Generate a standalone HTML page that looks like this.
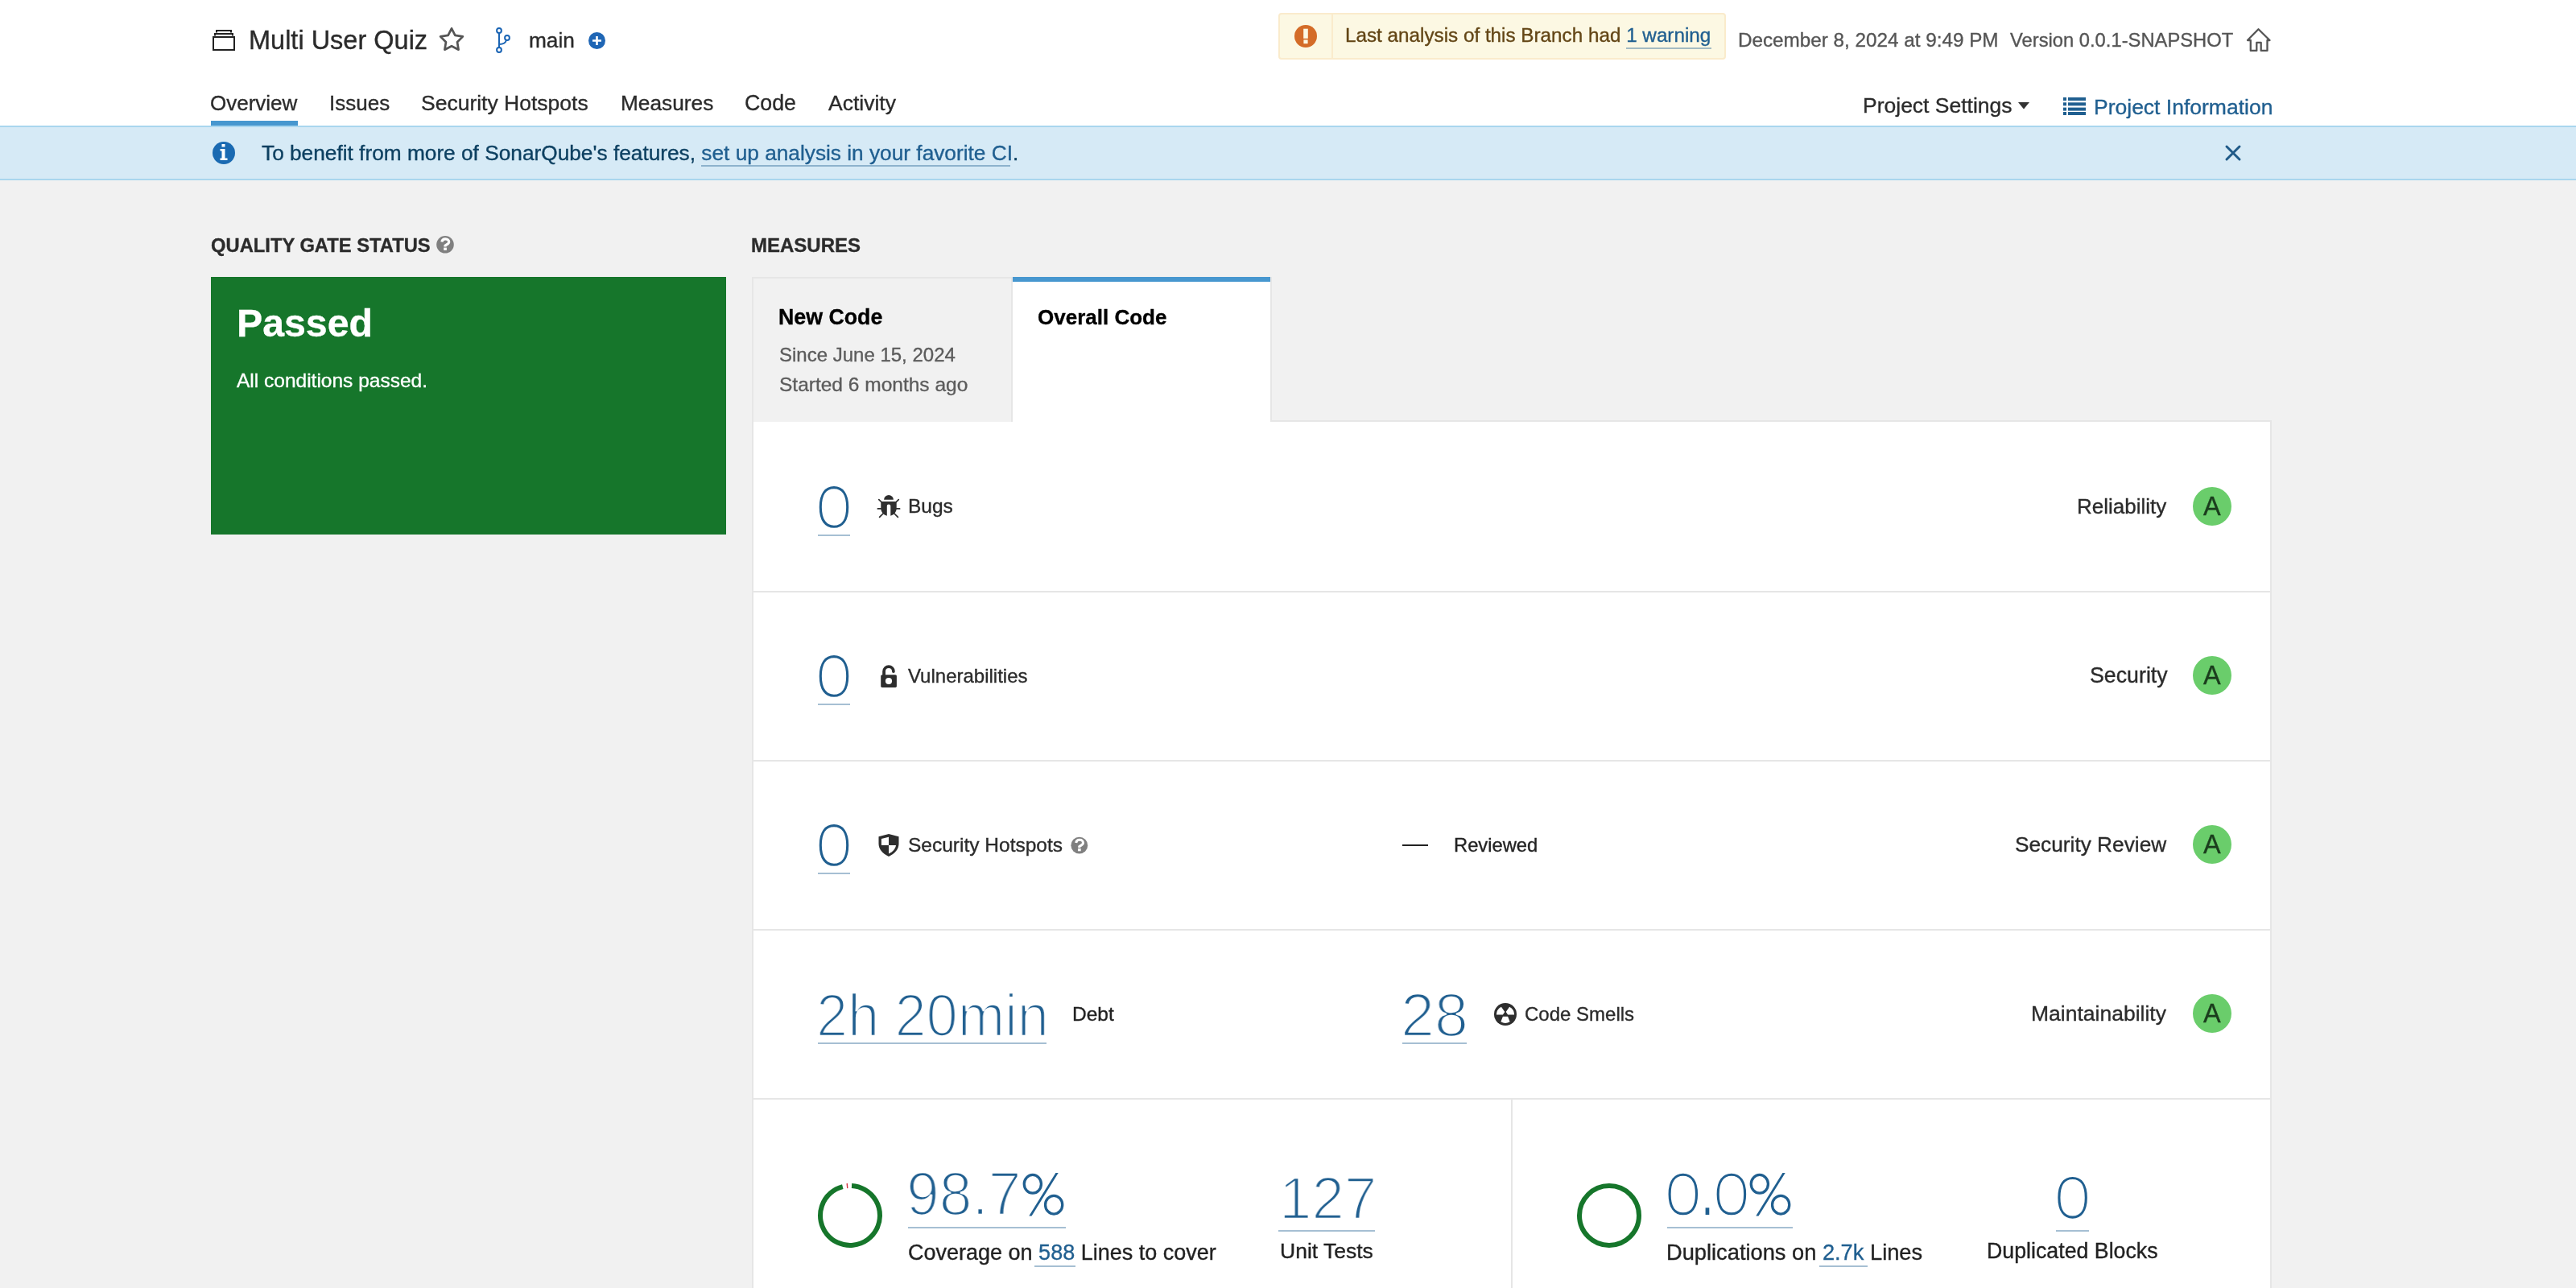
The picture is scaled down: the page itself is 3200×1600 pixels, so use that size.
<!DOCTYPE html>
<html><head><meta charset="utf-8"><title>Multi User Quiz - Overview</title>
<style>
html,body{margin:0;padding:0;width:3200px;height:1600px;overflow:hidden;background:#f1f1f1;font-family:"Liberation Sans",sans-serif}
.abs{position:absolute}
.t{position:absolute;white-space:nowrap;line-height:1;font-family:"Liberation Sans",sans-serif;will-change:transform;-webkit-text-stroke:0.35px currentColor}
.lk,.lk2,.lk3{color:#205f90}
svg{position:absolute;left:0;top:0;overflow:visible}
</style></head><body>
<!-- header -->
<div class="abs" style="left:0;top:0;width:3200px;height:156px;background:#fff"></div>
<div class="abs" style="left:1588px;top:16px;width:556px;height:58px;box-sizing:border-box;background:#fcf8e3;border:2px solid #faebcc;border-radius:4px"></div>
<div class="abs" style="left:1654px;top:18px;width:2px;height:54px;background:#faebcc"></div>
<div class="abs" style="left:262px;top:150px;width:108px;height:6px;background:#4797cf"></div>
<!-- banner -->
<div class="abs" style="left:0;top:156px;width:3200px;height:68px;box-sizing:border-box;background:#d6eaf6;border-top:2px solid #a9d6ee;border-bottom:2px solid #a9d6ee"></div>
<!-- quality gate -->
<div class="abs" style="left:262px;top:344px;width:640px;height:320px;background:#16762b"></div>
<!-- measures panel -->
<div class="abs" style="left:934px;top:522px;width:1888px;height:1200px;box-sizing:border-box;background:#fff;border:2px solid #e6e6e6"></div>
<div class="abs" style="left:934px;top:344px;width:324px;height:180px;box-sizing:border-box;background:#f1f1f1;border:2px solid #e6e6e6;border-bottom:0"></div>
<div class="abs" style="left:1258px;top:344px;width:322px;height:180px;box-sizing:border-box;background:#fff;border:2px solid #e6e6e6;border-bottom:0;border-left:0"></div>
<div class="abs" style="left:1258px;top:344px;width:320px;height:6px;background:#4797cf"></div>
<div class="abs" style="left:936px;top:734px;width:1884px;height:2px;background:#e6e6e6"></div><div class="abs" style="left:936px;top:944px;width:1884px;height:2px;background:#e6e6e6"></div><div class="abs" style="left:936px;top:1154px;width:1884px;height:2px;background:#e6e6e6"></div><div class="abs" style="left:936px;top:1364px;width:1884px;height:2px;background:#e6e6e6"></div>
<div class="abs" style="left:1877px;top:1366px;width:2px;height:300px;background:#e6e6e6"></div>
<div class="abs" style="left:2724px;top:605px;width:48px;height:48px;border-radius:50%;background:#6acd6b"></div><div class="abs" style="left:2724px;top:815px;width:48px;height:48px;border-radius:50%;background:#6acd6b"></div><div class="abs" style="left:2724px;top:1025px;width:48px;height:48px;border-radius:50%;background:#6acd6b"></div><div class="abs" style="left:2724px;top:1235px;width:48px;height:48px;border-radius:50%;background:#6acd6b"></div>
<div class="abs" style="left:2020px;top:58.5px;width:105.6px;height:2px;background:rgba(32,95,144,0.4)"></div><div class="abs" style="left:871px;top:205.4px;width:383.7px;height:2px;background:rgba(32,95,144,0.4)"></div><div class="abs" style="left:1016px;top:664px;width:40.0px;height:2px;background:rgba(32,95,144,0.4)"></div><div class="abs" style="left:1016px;top:874px;width:40.0px;height:2px;background:rgba(32,95,144,0.4)"></div><div class="abs" style="left:1016px;top:1084px;width:40.0px;height:2px;background:rgba(32,95,144,0.4)"></div><div class="abs" style="left:1016px;top:1295px;width:284.0px;height:2px;background:rgba(32,95,144,0.4)"></div><div class="abs" style="left:1742px;top:1295px;width:80.0px;height:2px;background:rgba(32,95,144,0.4)"></div><div class="abs" style="left:1128px;top:1524px;width:196.0px;height:2px;background:rgba(32,95,144,0.4)"></div><div class="abs" style="left:1284.6px;top:1572px;width:51.7px;height:2px;background:rgba(32,95,144,0.4)"></div><div class="abs" style="left:1588px;top:1528px;width:120.0px;height:2px;background:rgba(32,95,144,0.4)"></div><div class="abs" style="left:2071px;top:1524px;width:156.0px;height:2px;background:rgba(32,95,144,0.4)"></div><div class="abs" style="left:2259.6px;top:1572.4px;width:60.4px;height:2px;background:rgba(32,95,144,0.4)"></div><div class="abs" style="left:2554px;top:1528px;width:41.0px;height:2px;background:rgba(32,95,144,0.4)"></div>
<svg width="3200" height="1600" viewBox="0 0 3200 1600">
 <!-- project icon -->
 <g fill="none" stroke="#222" stroke-width="2">
  <rect x="265" y="46" width="26" height="16"/>
  <path d="M267,44.5 V42 H289 V44.5"/>
  <path d="M269,40.5 V38 H287 V40.5"/>
 </g>
 <!-- star -->
 <path d="M561.00,35.30 L565.35,43.91 L574.89,45.39 L568.04,52.19 L569.58,61.71 L561.00,57.30 L552.42,61.71 L553.96,52.19 L547.11,45.39 L556.65,43.91 Z" fill="none" stroke="#555" stroke-width="2.7" stroke-linejoin="round"/>
 <!-- branch -->
 <g fill="none" stroke="#1a64b4" stroke-width="2">
  <circle cx="620" cy="38" r="2.9"/>
  <circle cx="620" cy="62" r="2.9"/>
  <circle cx="630" cy="47" r="2.9"/>
  <path d="M620,41 V59"/>
  <path d="M629,50 C628,53 625,55 620.5,55"/>
 </g>
 <!-- plus circle -->
 <circle cx="741.5" cy="50.5" r="10.5" fill="#1f66b5"/>
 <path d="M741.5,45 V56 M736,50.5 H747" stroke="#fff" stroke-width="2.6"/>
 <!-- warning icon -->
 <circle cx="1622" cy="45" r="14" fill="#d46c28"/>
 <rect x="1619.2" y="35.7" width="5.6" height="12.1" fill="#fcf8e3"/>
 <rect x="1619.4" y="49.4" width="5.2" height="4.8" fill="#fcf8e3"/>
 <!-- home -->
 <path d="M2795.8,62.9 V50 H2792 L2805.5,36.2 L2819.5,50 H2816.5 V62.9 H2808.7 V52.9 H2803.3 V62.9 Z" fill="none" stroke="#555" stroke-width="2.3" stroke-linejoin="round"/>
 <!-- caret -->
 <path d="M2507,127 H2521 L2514,135.5 Z" fill="#333"/>
 <!-- list icon -->
 <g fill="#205f90">
  <rect x="2563" y="121" width="4" height="4"/><rect x="2569" y="121" width="22" height="4"/>
  <rect x="2563" y="127.3" width="4" height="4"/><rect x="2569" y="127.3" width="22" height="4"/>
  <rect x="2563" y="133.6" width="4" height="4"/><rect x="2569" y="133.6" width="22" height="4"/>
  <rect x="2563" y="139" width="4" height="4"/><rect x="2569" y="139" width="22" height="4"/>
 </g>
 <!-- info icon -->
 <circle cx="278" cy="190" r="14" fill="#1a6ab2"/>
 <rect x="275.5" y="179" width="4" height="3.5" fill="#fff"/>
 <path d="M273.5,185 H279.5 V196.5 H282.5 V199 H273.5 V196.5 H275.5 V187.5 H273.5 Z" fill="#fff"/>
 <!-- close X -->
 <path d="M2766,182 L2782,198 M2782,182 L2766,198" stroke="#1f5a88" stroke-width="3" stroke-linecap="round"/>
 <!-- help icons -->
 <g>
  <circle cx="553" cy="303.8" r="10.8" fill="#808080"/>
  <path d="M548.9,300.6 C549.3,298 551.2,296.9 553.3,296.9 C556,296.9 557.7,298.6 557.7,300.6 C557.7,303 555,303.6 553,305.2 V306.6" fill="none" stroke="#fff" stroke-width="3.2"/>
  <rect x="551.2" y="307.6" width="3.7" height="3.3" fill="#fff"/>
 </g>
 <g transform="translate(787.8,746.4)">
  <circle cx="553" cy="303.8" r="10.4" fill="#808080"/>
  <path d="M548.9,300.6 C549.3,298 551.2,296.9 553.3,296.9 C556,296.9 557.7,298.6 557.7,300.6 C557.7,303 555,303.6 553,305.2 V306.6" fill="none" stroke="#fff" stroke-width="3.1"/>
  <rect x="551.2" y="307.6" width="3.7" height="3.3" fill="#fff"/>
 </g>
 <!-- bug -->
 <g fill="#2e2e2e">
  <path d="M1098.1,620.8 A5.9,5.7 0 0 1 1109.9,620.8 Z"/>
  <path d="M1094.3,623 H1113.7 V632 C1113.5,635.5 1111.5,639 1106.3,640.8 V628.6 C1106.3,627.3 1105.3,626.6 1104,626.6 C1102.7,626.6 1101.8,627.3 1101.8,628.6 V640.8 C1096.5,639 1094.5,635.5 1094.3,632 Z"/>
 </g>
 <g stroke="#2e2e2e" stroke-width="1.7" stroke-linecap="round" fill="none">
  <path d="M1091.8,620.6 L1095,623.6 M1116.3,620.6 L1113.2,623.6 M1090.4,631.9 H1094.5 M1117.6,631.9 H1113.5 M1092.6,642.3 L1097,638 M1115.4,642.3 L1111,638"/>
 </g>
 <!-- lock -->
 <rect x="1094.2" y="838.2" width="19.7" height="15.7" rx="1.6" fill="#2e2e2e"/>
 <circle cx="1104" cy="846" r="4.1" fill="#fff"/>
 <path d="M1098.1,838.5 V834 A5.9,5.9 0 0 1 1109.9,834" fill="none" stroke="#2e2e2e" stroke-width="3.8" stroke-linecap="round"/>
 <!-- shield -->
 <path d="M1104,1036 L1116.5,1039.3 V1048 C1116.5,1055 1111.5,1060.5 1104,1064 C1096.5,1060.5 1091.5,1055 1091.5,1048 V1039.3 Z" fill="#2e2e2e"/>
 <path d="M1094.9,1042 L1104,1039.8 V1050 H1094.9 Z M1104,1050 H1113 C1112.4,1054.5 1108.7,1058.6 1104,1060.4 Z" fill="#fff"/>
 <!-- dash -->
 <rect x="1742" y="1049" width="32" height="2" fill="#222"/>
 <!-- code smell -->
 <circle cx="1870" cy="1260" r="14" fill="#2e2e2e"/>
 <path d="M1858.9,1260.6 A11.1,11.1 0 0 1 1864.9,1250.7 L1869.3,1257 L1866.9,1260.6 Z M1881.1,1260.6 A11.1,11.1 0 0 0 1875.1,1250.7 L1870.7,1257 L1873.1,1260.6 Z M1866.9,1262.7 H1873.1 L1875.6,1269.3 A11.1,11.1 0 0 1 1864.4,1269.3 Z" fill="#fff"/>
 <!-- donuts -->
 <path d="M1058.00,1473.05 A37,37 0 1 1 1046.80,1474.16" fill="none" stroke="#16762b" stroke-width="6"/>
 <path d="M1051.80,1473.24 A37,37 0 0 1 1053.20,1473.11" fill="none" stroke="#d4333f" stroke-width="6"/>
 <circle cx="1999" cy="1510" r="37" fill="none" stroke="#16762b" stroke-width="6"/>

 <!-- percent signs + 0.0 -->
 <g id="pct" fill="none" stroke="#205f90" stroke-width="3.3">
  <ellipse cx="1282.85" cy="1470.8" rx="10.6" ry="11.35"/>
  <ellipse cx="1309.15" cy="1496.7" rx="10.6" ry="11.35"/>
 </g>
 <path d="M1311.4,1457.1 H1314.7 L1281.6,1510.6 H1278.3 Z" fill="#205f90"/>
 <g transform="translate(903,0)">
  <g fill="none" stroke="#205f90" stroke-width="3.3">
   <ellipse cx="1282.85" cy="1470.8" rx="10.6" ry="11.35"/>
   <ellipse cx="1309.15" cy="1496.7" rx="10.6" ry="11.35"/>
  </g>
  <path d="M1311.4,1457.1 H1314.7 L1281.6,1510.6 H1278.3 Z" fill="#205f90"/>
 </g>
 <rect x="2118.6" y="1500.3" width="4.7" height="8.7" fill="#205f90"/>
 <!-- zeros -->
 <g fill="none" stroke="#205f90" stroke-width="3.1">
  <path d="M1036,605.60 C1046.02,605.60 1052.70,613.38 1052.70,629.9 C1052.70,646.42 1046.02,654.20 1036,654.20 C1025.98,654.20 1019.30,646.42 1019.30,629.9 C1019.30,613.38 1025.98,605.60 1036,605.60 Z"/>
  <path d="M1036,815.60 C1046.02,815.60 1052.70,823.38 1052.70,839.9 C1052.70,856.42 1046.02,864.20 1036,864.20 C1025.98,864.20 1019.30,856.42 1019.30,839.9 C1019.30,823.38 1025.98,815.60 1036,815.60 Z"/>
  <path d="M1036,1025.60 C1046.02,1025.60 1052.70,1033.38 1052.70,1049.9 C1052.70,1066.42 1046.02,1074.20 1036,1074.20 C1025.98,1074.20 1019.30,1066.42 1019.30,1049.9 C1019.30,1033.38 1025.98,1025.60 1036,1025.60 Z"/>
  <path d="M2574.6,1463.50 C2584.62,1463.50 2591.30,1471.28 2591.30,1487.8 C2591.30,1504.32 2584.62,1512.10 2574.6,1512.10 C2564.58,1512.10 2557.90,1504.32 2557.90,1487.8 C2557.90,1471.28 2564.58,1463.50 2574.6,1463.50 Z"/>
  <path d="M2090.8,1459.20 C2100.82,1459.20 2107.50,1466.98 2107.50,1483.5 C2107.50,1500.02 2100.82,1507.80 2090.8,1507.80 C2080.78,1507.80 2074.10,1500.02 2074.10,1483.5 C2074.10,1466.98 2080.78,1459.20 2090.8,1459.20 Z"/>
  <path d="M2150.9,1459.20 C2160.92,1459.20 2167.60,1466.98 2167.60,1483.5 C2167.60,1500.02 2160.92,1507.80 2150.9,1507.80 C2140.88,1507.80 2134.20,1500.02 2134.20,1483.5 C2134.20,1466.98 2140.88,1459.20 2150.9,1459.20 Z"/>
 </g>
</svg>
<div class="t" style="left:309.0px;top:34.0px;font-size:32.5px;font-weight:400;color:#2b2b2b;">Multi User Quiz</div>
<div class="t" style="left:657.0px;top:37.0px;font-size:26.25px;font-weight:400;color:#2b2b2b;">main</div>
<div class="t" style="left:1671.0px;top:32.4px;font-size:24.25px;font-weight:400;color:#634616;">Last analysis of this Branch had <span class="lk">1 warning</span></div>
<div class="t" style="left:2158.6px;top:37.8px;font-size:24.25px;font-weight:400;color:#555;">December 8, 2024 at 9:49 PM</div>
<div class="t" style="left:2497.0px;top:37.7px;font-size:23.75px;font-weight:400;color:#555;">Version 0.0.1-SNAPSHOT</div>
<div class="t" style="left:261.4px;top:115.0px;font-size:26.0px;font-weight:400;color:#2b2b2b;">Overview</div>
<div class="t" style="left:409.0px;top:115.0px;font-size:26.0px;font-weight:400;color:#2b2b2b;">Issues</div>
<div class="t" style="left:523.0px;top:115.0px;font-size:26.5px;font-weight:400;color:#2b2b2b;">Security Hotspots</div>
<div class="t" style="left:771.4px;top:115.0px;font-size:26.25px;font-weight:400;color:#2b2b2b;">Measures</div>
<div class="t" style="left:925.4px;top:115.0px;font-size:26.75px;font-weight:400;color:#2b2b2b;">Code</div>
<div class="t" style="left:1028.6px;top:115.0px;font-size:26.5px;font-weight:400;color:#2b2b2b;">Activity</div>
<div class="t" style="left:2314.0px;top:117.6px;font-size:26.5px;font-weight:400;color:#2b2b2b;">Project Settings</div>
<div class="t" style="left:2600.5px;top:120.0px;font-size:26.5px;font-weight:400;color:#205f90;">Project Information</div>
<div class="t" style="left:325.3px;top:177.0px;font-size:26.25px;font-weight:400;color:#0d4061;">To benefit from more of SonarQube's features, <span class="lk2">set up analysis in your favorite CI</span>.</div>
<div class="t" style="left:261.7px;top:293.0px;font-size:23.75px;font-weight:700;color:#2b2b2b;">QUALITY GATE STATUS</div>
<div class="t" style="left:933.4px;top:292.8px;font-size:24.0px;font-weight:700;color:#2b2b2b;">MEASURES</div>
<div class="t" style="left:293.6px;top:377.2px;font-size:48.25px;font-weight:700;color:#fff;">Passed</div>
<div class="t" style="left:294.0px;top:461.0px;font-size:24.5px;font-weight:400;color:#fff;">All conditions passed.</div>
<div class="t" style="left:967.0px;top:381.0px;font-size:26.75px;font-weight:700;color:#000;">New Code</div>
<div class="t" style="left:968.0px;top:429.0px;font-size:24.0px;font-weight:400;color:#5c5c5c;">Since June 15, 2024</div>
<div class="t" style="left:968.0px;top:466.0px;font-size:24.5px;font-weight:400;color:#5c5c5c;">Started 6 months ago</div>
<div class="t" style="left:1289.3px;top:381.0px;font-size:26.0px;font-weight:700;color:#000;">Overall Code</div>
<div class="t" style="left:1127.5px;top:616.8px;font-size:24.5px;font-weight:400;color:#2b2b2b;">Bugs</div>
<div class="t" style="left:2580.4px;top:615.7px;font-size:26.0px;font-weight:400;color:#2b2b2b;">Reliability</div>
<div class="t" style="left:1128.0px;top:827.7px;font-size:24.0px;font-weight:400;color:#2b2b2b;">Vulnerabilities</div>
<div class="t" style="left:2595.6px;top:825.7px;font-size:26.75px;font-weight:400;color:#2b2b2b;">Security</div>
<div class="t" style="left:1128.0px;top:1037.6px;font-size:24.5px;font-weight:400;color:#2b2b2b;">Security Hotspots</div>
<div class="t" style="left:1805.7px;top:1037.7px;font-size:23.75px;font-weight:400;color:#222;">Reviewed</div>
<div class="t" style="left:2503.3px;top:1035.7px;font-size:26.25px;font-weight:400;color:#2b2b2b;">Security Review</div>
<div class="t" style="left:1331.5px;top:1248.0px;font-size:24.5px;font-weight:400;color:#222;">Debt</div>
<div class="t" style="left:1894.0px;top:1247.7px;font-size:24.0px;font-weight:400;color:#2b2b2b;">Code Smells</div>
<div class="t" style="left:2523.2px;top:1245.7px;font-size:26.5px;font-weight:400;color:#2b2b2b;">Maintainability</div>
<div class="t" style="left:2737.4px;top:612.8px;font-size:32.5px;font-weight:400;color:#1b3d1d;">A</div>
<div class="t" style="left:2737.4px;top:822.8px;font-size:32.5px;font-weight:400;color:#1b3d1d;">A</div>
<div class="t" style="left:2737.4px;top:1032.8px;font-size:32.5px;font-weight:400;color:#1b3d1d;">A</div>
<div class="t" style="left:2737.4px;top:1242.8px;font-size:32.5px;font-weight:400;color:#1b3d1d;">A</div>
<div class="t" style="left:1127.8px;top:1542.7px;font-size:27.0px;font-weight:400;color:#222;">Coverage on <span class="lk3">588</span> Lines to cover</div>
<div class="t" style="left:1590.0px;top:1541.0px;font-size:26.5px;font-weight:400;color:#222;">Unit Tests</div>
<div class="t" style="left:2070.3px;top:1542.0px;font-size:27.25px;font-weight:400;color:#222;">Duplications on <span class="lk3">2.7k</span> Lines</div>
<div class="t" style="left:2468.2px;top:1541.0px;font-size:26.75px;font-weight:400;color:#222;">Duplicated Blocks</div>
<div class="t" style="left:1014.3px;top:1225.0px;font-size:74.5px;font-weight:400;color:#205f90;transform:scaleX(0.9424);transform-origin:0 0;-webkit-text-stroke:2.7px #fff;">2h 20min</div>
<div class="t" style="left:1740.3px;top:1223.0px;font-size:76.5px;font-weight:400;color:#205f90;transform:scaleX(0.9867);transform-origin:0 0;-webkit-text-stroke:2.7px #fff;">28</div>
<div class="t" style="left:1126.2px;top:1445.0px;font-size:76.5px;font-weight:400;color:#205f90;transform:scaleX(0.9576);transform-origin:0 0;-webkit-text-stroke:2.7px #fff;">98.7</div>
<div class="t" style="left:1588.7px;top:1450.5px;font-size:75.0px;font-weight:400;color:#205f90;transform:scaleX(0.9690);transform-origin:0 0;-webkit-text-stroke:2.7px #fff;">127</div>
</body></html>
